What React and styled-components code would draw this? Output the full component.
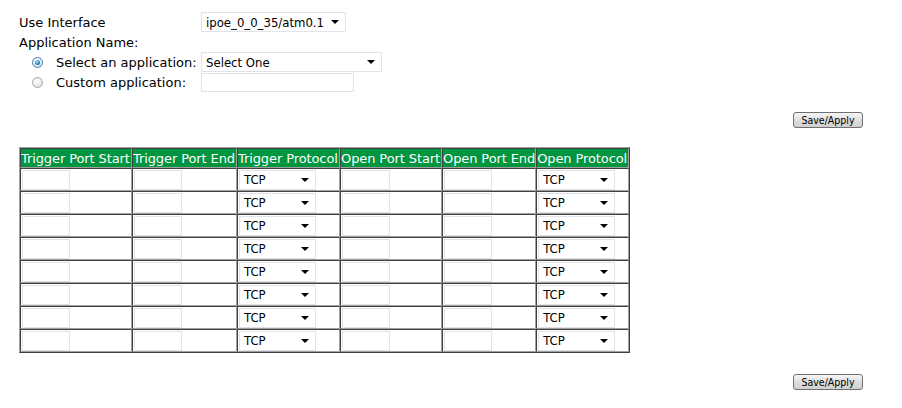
import React from 'react';
import styled, { createGlobalStyle } from 'styled-components';

const GlobalStyle = createGlobalStyle`
    body {
        margin: 0;
        background: #fff;
        font-family: "DejaVu Sans", Verdana, sans-serif;
        font-size: 13px;
        color: #000;
    }
`;

const Page = styled.div`
    width: 844px;
    padding: 12px 0 0 19px;
`;

const FormRow = styled.div`
    display: flex;
    align-items: center;
    height: ${(props) => props.h || 20}px;
    margin-top: ${(props) => props.mt || 0}px;
`;

const Label = styled.span`
    width: ${(props) => props.w || 182}px;
    padding-left: ${(props) => props.indent || 0}px;
    white-space: nowrap;
    box-sizing: border-box;
`;

const Radio = styled.span`
    display: inline-block;
    position: relative;
    width: 11px;
    height: 11px;
    margin: 0 13px 0 13px;
    border-radius: 50%;
    border: 1px solid ${(props) => (props.checked ? '#3c7fb1' : '#a8a8a8')};
    background: radial-gradient(circle at 40% 35%, #ffffff 0%, #e8e8e8 60%, #cfcfcf 100%);
    box-sizing: border-box;

    &::after {
        content: '';
        display: ${(props) => (props.checked ? 'block' : 'none')};
        position: absolute;
        left: 2px;
        top: 2px;
        width: 5px;
        height: 5px;
        border-radius: 50%;
        background: radial-gradient(circle at 40% 35%, #a6e0ff 0%, #1d86c8 60%, #0a4f8a 100%);
    }
`;

const SelectBox = styled.div`
    display: flex;
    align-items: center;
    justify-content: space-between;
    width: ${(props) => props.w}px;
    height: ${(props) => props.h || 20}px;
    padding: 0 6px 0 4px;
    box-sizing: border-box;
    border: 1px solid #e2e3ea;
    background: #fff;
    font-family: "DejaVu Sans Condensed", "DejaVu Sans", sans-serif;
    font-size: 13px;
    white-space: nowrap;
`;

const Arrow = styled.span`
    width: 0;
    height: 0;
    border-left: 4px solid transparent;
    border-right: 4px solid transparent;
    border-top: 4px solid #000;
`;

const TextBox = styled.div`
    width: ${(props) => props.w}px;
    height: ${(props) => props.h || 20}px;
    box-sizing: border-box;
    border: 1px solid #e2e3ea;
    background: #fff;
`;

const ButtonRow = styled.div`
    display: flex;
    justify-content: flex-end;
    margin-top: ${(props) => props.mt}px;
`;

const Button = styled.button`
    width: 70px;
    height: 16px;
    padding: 0;
    border: 1px solid #707070;
    border-radius: 3px;
    background: linear-gradient(#f6f6f6, #dedede 50%, #d0d0d0);
    font-family: "DejaVu Sans Condensed", "DejaVu Sans", sans-serif;
    font-size: 10.5px;
    color: #000;
    line-height: 14px;
`;

const Table = styled.table`
    margin-top: 19px;
    border-collapse: separate;
    border-spacing: 0;
    border: 1px solid;
    border-color: #a0a0a0 #404040 #404040 #a0a0a0;
    table-layout: fixed;
`;

const HeadCell = styled.th`
    width: ${(props) => props.w}px;
    height: 18px;
    padding: 0;
    background: #00953f;
    color: #fff;
    font-weight: normal;
    font-size: 13px;
    letter-spacing: -0.1px;
    text-align: left;
    white-space: nowrap;
    overflow: hidden;
    border: 1px solid;
    border-color: #404040 #a0a0a0 #a0a0a0 #404040;
`;

const Cell = styled.td`
    height: 21px;
    padding: 0 0 0 1px;
    border: 1px solid;
    border-color: #404040 #a0a0a0 #a0a0a0 #404040;
    vertical-align: middle;
`;

const columns = [
    { title: 'Trigger Port Start', w: 110, kind: 'text' },
    { title: 'Trigger Port End', w: 103, kind: 'text' },
    { title: 'Trigger Protocol', w: 101, kind: 'select' },
    { title: 'Open Port Start', w: 100, kind: 'text' },
    { title: 'Open Port End', w: 91, kind: 'text' },
    { title: 'Open Protocol', w: 91, kind: 'select' },
];

const rows = [0, 1, 2, 3, 4, 5, 6, 7];

function App() {
    return (
        <Page>
            <GlobalStyle />
            <FormRow>
                <Label>Use Interface</Label>
                <SelectBox w={145}>
                    ipoe_0_0_35/atm0.1 <Arrow />
                </SelectBox>
            </FormRow>
            <FormRow>
                <Label>Application Name:</Label>
            </FormRow>
            <FormRow>
                <Radio checked />
                <Label w={145}>Select an application:</Label>
                <SelectBox w={181}>
                    Select One <Arrow />
                </SelectBox>
            </FormRow>
            <FormRow h={19} mt={1}>
                <Radio />
                <Label w={145}>Custom application:</Label>
                <TextBox w={153} h={19} />
            </FormRow>

            <ButtonRow mt={20}>
                <Button>Save/Apply</Button>
            </ButtonRow>

            <Table>
                <thead>
                    <tr>
                        {columns.map((c) => (
                            <HeadCell key={c.title} w={c.w}>{c.title}</HeadCell>
                        ))}
                    </tr>
                </thead>
                <tbody>
                    {rows.map((r) => (
                        <tr key={r}>
                            {columns.map((c) => (
                                <Cell key={c.title}>
                                    {c.kind === 'text' ? (
                                        <TextBox w={48} />
                                    ) : (
                                        <SelectBox w={77}>
                                            TCP <Arrow />
                                        </SelectBox>
                                    )}
                                </Cell>
                            ))}
                        </tr>
                    ))}
                </tbody>
            </Table>

            <ButtonRow mt={21}>
                <Button>Save/Apply</Button>
            </ButtonRow>
        </Page>
    );
}

export default App;
